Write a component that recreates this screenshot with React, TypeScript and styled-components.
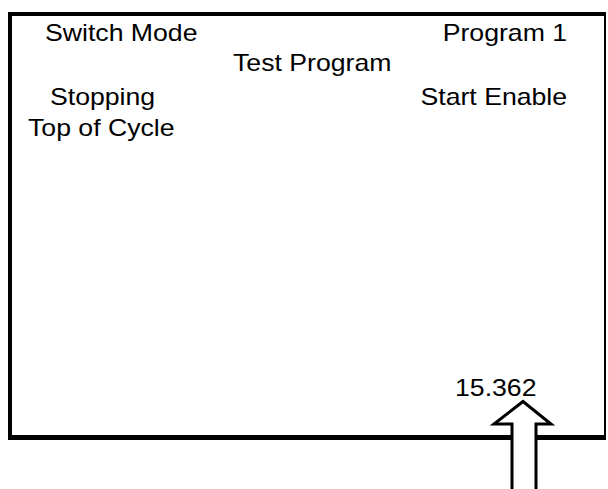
import styled, { createGlobalStyle } from "styled-components";

const GlobalStyle = createGlobalStyle`
  html, body {
    margin: 0;
    padding: 0;
    background: #ffffff;
  }
  body {
    font-family: "Liberation Sans", Arial, sans-serif;
    color: #000000;
  }
`;

interface DisplayLine {
  left?: string;
  leftIndent?: number;
  right?: string;
  gap?: number;
}

const lines: DisplayLine[] = [
  { left: "Switch Mode", leftIndent: 33, right: "Program 1" },
  { left: "Test Program", leftIndent: 221 },
  { left: "Stopping", leftIndent: 38, right: "Start Enable", gap: 4 },
  { left: "Top of Cycle", leftIndent: 16, gap: 1 },
];

export default function App() {
  return (
    <>
      <GlobalStyle />
      <Page>
        <Screen>
          <Lines>
            {lines.map((line, i) => (
              <Row key={i} $gap={line.gap ?? 0}>
                <Indent $width={line.leftIndent ?? 0} />
                <Label>{line.left}</Label>
                {line.right && <RightLabel>{line.right}</RightLabel>}
              </Row>
            ))}
          </Lines>
          <Row $gap={0}>
            <Indent $width={443} />
            <Label>15.362</Label>
          </Row>
        </Screen>
        <Pointer width="80" height="92" viewBox="0 0 80 92">
          <polyline
            points="25,92 25,24 7,24 36,1.5 64,24 49,24 49,92"
            fill="#ffffff"
            stroke="#000000"
            strokeWidth="3"
            strokeLinejoin="miter"
          />
        </Pointer>
      </Page>
    </>
  );
}

const Page = styled.div`
  position: relative;
  width: 608px;
  height: 489px;
  padding: 12px 0 0 8px;
  box-sizing: border-box;
  overflow: hidden;
`;

const Screen = styled.div`
  width: 598px;
  height: 428px;
  box-sizing: border-box;
  border-style: solid;
  border-color: #000000;
  border-width: 4px 2px 5px 4px;
  padding: 2px 37px 32px 0;
  display: flex;
  flex-direction: column;
  justify-content: space-between;
`;

const Lines = styled.div`
  display: flex;
  flex-direction: column;
`;

const Row = styled.div<{ $gap: number }>`
  display: flex;
  align-items: baseline;
  height: 30px;
  margin-top: ${(p) => p.$gap}px;
  line-height: 30px;
  font-size: 24px;
  white-space: nowrap;
`;

const Indent = styled.span<{ $width: number }>`
  flex: none;
  width: ${(p) => p.$width}px;
`;

const Label = styled.span`
  display: inline-block;
  transform: scaleX(1.11);
  transform-origin: left center;
`;

const RightLabel = styled(Label)`
  margin-left: auto;
  transform-origin: right center;
`;

const Pointer = styled.svg`
  position: absolute;
  left: 487px;
  top: 400px;
  overflow: visible;
`;
